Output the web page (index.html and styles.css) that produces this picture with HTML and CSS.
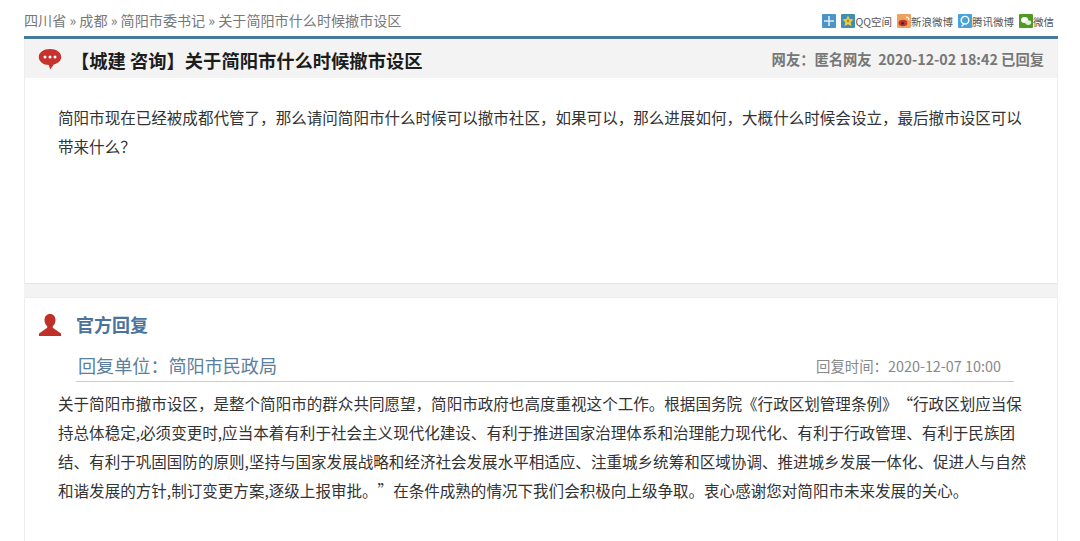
FILE: index.html
```html
<!DOCTYPE html>
<html lang="zh-CN">
<head>
    <meta charset="UTF-8">
    <meta name="viewport" content="width=device-width, initial-scale=1.0">
    <title>关于简阳市什么时候撤市设区</title>
    <link rel="stylesheet" href="styles.css">
</head>
<body>
    <div class="container">
        <div class="topbar">
            <div class="crumbs">四川省 » 成都 » 简阳市委书记 » 关于简阳市什么时候撤市设区</div>
            <div class="share">
                <svg class="ico ico-plus" viewBox="0 0 14 14"><rect width="14" height="14" rx="1" fill="#4a94c8"/><path d="M7 2v10M2 7h10" stroke="#dcecf6" stroke-width="1.600"/></svg>
                <span class="share-item"><svg class="ico" viewBox="0 0 14 14"><rect width="14" height="14" rx="1" fill="#3d8fb5"/><path d="M7 1.500l1.700 3.600 3.800.5-2.800 2.600.8 3.900L7 10.200l-3.500 1.900.8-3.900L1.500 5.600l3.800-.5z" fill="#f2cf3a"/><circle cx="7" cy="7" r="1.400" fill="#c9822a"/></svg>QQ空间</span>
                <span class="share-item"><svg class="ico" viewBox="0 0 14 14"><rect width="14" height="14" rx="1" fill="#eda25f"/><ellipse cx="6" cy="9" rx="4.400" ry="3.200" fill="#c8352c"/><circle cx="5.600" cy="9.200" r="1.500" fill="#333"/><path d="M9 3.200c1.600 0 3 1.300 3 3" stroke="#fff" fill="none" stroke-width="1.200"/></svg>新浪微博</span>
                <span class="share-item"><svg class="ico" viewBox="0 0 14 14"><rect width="14" height="14" rx="1" fill="#48a3dc"/><circle cx="7" cy="6.200" r="3.800" stroke="#fff" stroke-width="1.400" fill="none"/><path d="M3.600 12.400c1.200-.8 2-2 2.400-3.600" stroke="#fff" stroke-width="1.300" fill="none"/></svg>腾讯微博</span>
                <span class="share-item"><svg class="ico" viewBox="0 0 14 14"><rect width="14" height="14" rx="1" fill="#4f9a22"/><ellipse cx="5.600" cy="6" rx="3.600" ry="2.900" fill="#fff"/><ellipse cx="9.200" cy="8.600" rx="3" ry="2.400" fill="#e4f1da"/></svg>微信</span>
            </div>
        </div>

        <div class="question">
            <div class="q-head">
                <div class="q-title">
                    <svg class="bubble" viewBox="0 0 24 24"><path d="M12 2C5.600 2 .8 5.300.8 10s4.800 8 10 8l1.400 4.600 3.600-5.200c4.400-1 7.400-3.800 7.400-7.400C23.200 5.300 18.400 2 12 2z" fill="#c8312c"/><circle cx="7" cy="10" r="1.500" fill="#fff"/><circle cx="12" cy="10" r="1.500" fill="#fff"/><circle cx="17" cy="10" r="1.500" fill="#fff"/></svg>
                    <h1>【城建 咨询】关于简阳市什么时候撤市设区</h1>
                </div>
                <div class="q-meta">网友：匿名网友&nbsp; 2020-12-02 18:42 已回复</div>
            </div>
            <p class="q-body">简阳市现在已经被成都代管了，那么请问简阳市什么时候可以撤市社区，如果可以，那么进展如何，大概什么时候会设立，最后撤市设区可以带来什么？</p>
        </div>

        <div class="reply">
            <div class="r-head">
                <svg class="person" viewBox="0 0 24 24"><path d="M12 1c-3.400 0-5.500 2.600-5.500 6 0 2.600 1 4.800 2.700 6.200v1.600L1 20.500V23h22v-2.500l-8.200-5.700v-1.600c1.700-1.400 2.700-3.600 2.700-6.200 0-3.400-2.100-6-5.500-6z" fill="#c0302b"/></svg>
                <h2>官方回复</h2>
            </div>
            <div class="r-info">
                <span class="r-unit">回复单位：简阳市民政局</span>
                <span class="r-time">回复时间：2020-12-07 10:00</span>
            </div>
            <p class="r-body">关于简阳市撤市设区，是整个简阳市的群众共同愿望，简阳市政府也高度重视这个工作。根据国务院《行政区划管理条例》“行政区划应当保持总体稳定,必须变更时,应当本着有利于社会主义现代化建设、有利于推进国家治理体系和治理能力现代化、有利于行政管理、有利于民族团结、有利于巩固国防的原则,坚持与国家发展战略和经济社会发展水平相适应、注重城乡统筹和区域协调、推进城乡发展一体化、促进人与自然和谐发展的方针,制订变更方案,逐级上报审批。”在条件成熟的情况下我们会积极向上级争取。衷心感谢您对简阳市未来发展的关心。</p>
        </div>
    </div>
</body>
</html>
```

FILE: styles.css
```css
html, body {
    height: 100%;
}
body {
    font-family: "Noto Sans CJK SC", "Liberation Sans", sans-serif;
    background-color: #ffffff;
    color: #333333;
    margin: 0;
    overflow: hidden;
}
.container {
    width: 1034px;
    margin-left: 24px;
}
.topbar {
    height: 39px;
    display: flex;
    justify-content: space-between;
    align-items: center;
    padding-top: 6px;
    box-sizing: border-box;
    border-bottom: 3px solid #47799a;
}
.crumbs {
    font-size: 14.100px;
    color: #777777;
    margin-top: -2px;
}
.share {
    display: flex;
    align-items: center;
    font-size: 10.500px;
    color: #555555;
    margin-right: 4px;
}
.share-item {
    display: flex;
    align-items: center;
    margin-left: 5px;
}
.ico {
    width: 14px;
    height: 14px;
}
.question {
    border-left: 1px solid #eeeeee;
    border-right: 1px solid #eeeeee;
}
.q-head {
    height: 39px;
    background-color: #f3f3f3;
    display: flex;
    justify-content: space-between;
    align-items: center;
    padding: 0 13px;
}
.q-title {
    display: flex;
    align-items: center;
}
.bubble {
    width: 24px;
    height: 24px;
}
h1 {
    font-size: 18.300px;
    font-weight: bold;
    color: #1c1c1c;
    margin: 2px 0 0 9px;
    line-height: 24px;
}
.q-meta {
    font-size: 14.300px;
    font-weight: bold;
    color: #777777;
}
.q-body {
    font-size: 15.550px;
    line-height: 29px;
    margin: 0;
    padding: 25px 33px 0 33px;
    height: 180px;
    border-bottom: 1px solid #e6e6e6;
}
.reply {
    margin-top: 13px;
    background-color: #ffffff;
    border-left: 1px solid #eeeeee;
    border-right: 1px solid #eeeeee;
    border-top: 1px solid #eeeeee;
    box-shadow: 0 -13px 0 #f3f3f3;
    padding: 0 30px 40px 33px;
}
.r-head {
    display: flex;
    align-items: center;
    height: 53px;
    margin-left: -20px;
}
.person {
    width: 24px;
    height: 24px;
}
h2 {
    font-size: 18px;
    font-weight: bold;
    color: #4a739e;
    margin: -2px 0 0 14px;
    line-height: 24px;
}
.r-info {
    display: flex;
    justify-content: space-between;
    align-items: center;
    height: 31px;
    padding: 0 13px 2px 2px;
    margin: 0 13px 0 18px;
    box-sizing: border-box;
    border-bottom: 1px solid #cccccc;
}
.r-unit {
    font-size: 18.100px;
    color: #5b7f9e;
}
.r-time {
    font-size: 14.400px;
    color: #888888;
}
.r-body {
    font-size: 15.550px;
    line-height: 29px;
    margin: 0;
    padding-top: 7px;
    color: #333333;
    text-spacing-trim: space-all;
}
```
